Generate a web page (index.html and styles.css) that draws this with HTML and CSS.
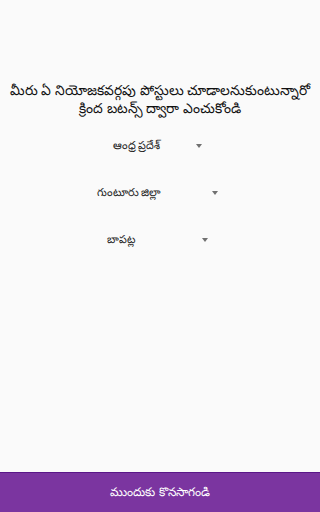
FILE: index.html
```html
<!DOCTYPE html>
<html lang="te">
<head>
<meta charset="utf-8">
<link rel="stylesheet" href="styles.css">
</head>
<body>
<div class="screen">
  <main class="content">
    <h1 class="title">మీరు ఏ నియోజకవర్గపు పోస్టులు చూడాలనుకుంటున్నారో క్రింద బటన్స్ ద్వారా ఎంచుకోండి</h1>
    <div class="spinners">
      <div class="spinner spinner-state">
        <span class="spinner-text">ఆంధ్ర ప్రదేశ్</span>
        <span class="arrow"></span>
      </div>
      <div class="spinner spinner-district">
        <span class="spinner-text">గుంటూరు జిల్లా</span>
        <span class="arrow"></span>
      </div>
      <div class="spinner spinner-place">
        <span class="spinner-text">బాపట్ల</span>
        <span class="arrow"></span>
      </div>
    </div>
  </main>
  <button class="next-button">ముందుకు కొనసాగండి</button>
</div>
</body>
</html>
```

FILE: styles.css
```css
html, body {
  margin: 0;
  padding: 0;
  height: 100%;
}
body {
  background: #fafafa;
  font-family: "Noto Sans", "DejaVu Sans", sans-serif;
  color: #212121;
}
.screen {
  display: flex;
  flex-direction: column;
  height: 512px;
}
.content {
  flex: 1;
  display: flex;
  flex-direction: column;
  align-items: center;
  padding-top: 81px;
}
.title {
  margin: 0;
  font-size: 13.8px;
  font-weight: normal;
  line-height: 18px;
  text-align: center;
  color: #111;
  padding: 0 9px;
}
.spinners {
  display: flex;
  flex-direction: column;
  align-items: center;
  margin-top: 19px;
  gap: 28px;
}
.spinner {
  display: flex;
  align-items: center;
  justify-content: space-between;
  height: 19px;
  padding-right: 6px;
  font-size: 11px;
  color: #222;
}
.spinner-state { width: 89px; }
.spinner-district { width: 121px; }
.spinner-place { width: 101px; }
.arrow {
  width: 0;
  height: 0;
  border-left: 3.5px solid transparent;
  border-right: 3.5px solid transparent;
  border-top: 4px solid #707070;
}
.next-button {
  height: 40px;
  border: none;
  border-top: 1px solid #5a1788;
  background: #7b35a0;
  color: #fff;
  font-family: inherit;
  font-size: 12px;
  padding: 0;
}
```
